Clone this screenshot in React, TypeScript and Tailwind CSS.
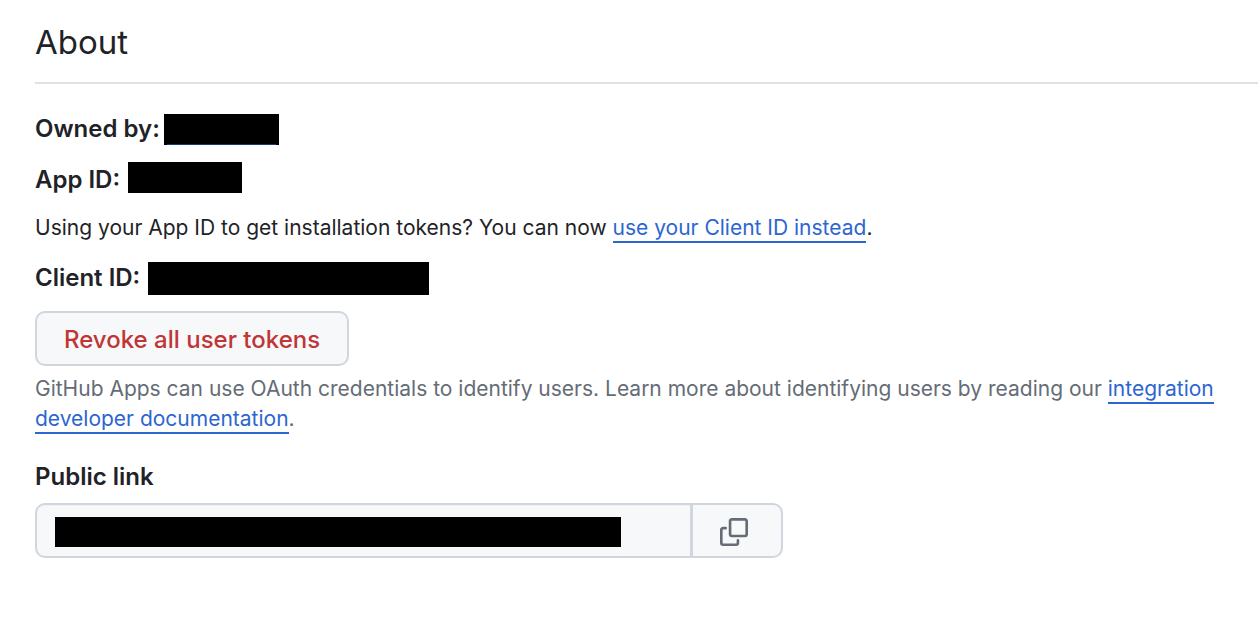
const linkClass = "border-b-2 border-[#2c66d0] pb-px text-[#2c66d0]";

function Redacted({ className }: { className: string }) {
  return <span aria-hidden="true" className={`block bg-black ${className}`} />;
}

function CopyIcon() {
  return (
    <svg aria-hidden="true" viewBox="0 0 16 16" className="size-7 fill-current">
      <path d="M0 6.75C0 5.784.784 5 1.75 5h1.5a.75.75 0 0 1 0 1.5h-1.5a.25.25 0 0 0-.25.25v7.5c0 .138.112.25.25.25h7.5a.25.25 0 0 0 .25-.25v-1.5a.75.75 0 0 1 1.5 0v1.5A1.75 1.75 0 0 1 9.25 16h-7.5A1.75 1.75 0 0 1 0 14.25Z" />
      <path d="M5 1.75C5 .784 5.784 0 6.75 0h7.5C15.216 0 16 .784 16 1.75v7.5A1.75 1.75 0 0 1 14.25 11h-7.5A1.75 1.75 0 0 1 5 9.25Zm1.75-.25a.25.25 0 0 0-.25.25v7.5c0 .138.112.25.25.25h7.5a.25.25 0 0 0 .25-.25v-7.5a.25.25 0 0 0-.25-.25Z" />
    </svg>
  );
}

export default function App() {
  return (
    <main className="bg-white pl-[35px] font-['Inter',sans-serif] text-[#1f2328]">
      <h2 className="border-b-2 border-[#dfe3e8] pt-5 pb-[18px] text-[33px] leading-[44px]">About</h2>

      <div className="flex items-start gap-1 pt-[30px]">
        <strong className="text-2xl leading-[30px] font-semibold">Owned by:</strong>
        <a href="#owner" aria-label="Owner" className="flex h-[31px] w-[115px] items-end bg-black px-[3px]">
          <span className="h-px w-full bg-[#173a7c]" />
        </a>
      </div>
      <div className="flex items-start gap-2 pt-[17px]">
        <strong className="text-2xl leading-9 font-semibold">App ID:</strong>
        <Redacted className="h-[31px] w-[114px]" />
      </div>
      <p className="pt-[15px] text-[21px] leading-[30px]">
        Using your App ID to get installation tokens? You can now{" "}
        <a href="#client-id" className={linkClass}>use your Client ID instead</a>.
      </p>
      <div id="client-id" className="flex items-start gap-2 pt-[19px]">
        <strong className="text-2xl leading-8 font-semibold">Client ID:</strong>
        <Redacted className="h-[33px] w-[281px]" />
      </div>
      <button
        type="button"
        className="mt-4 block h-[55px] rounded-[10px] border-2 border-[#d1d6de] bg-[#f6f8fa] px-[27px] pt-0.5 text-2xl font-medium text-[#c03535]"
      >
        Revoke all user tokens
      </button>
      <p className="pt-2 pr-10 text-[21px] leading-[30px] text-[#656c76]">
        GitHub Apps can use OAuth credentials to identify users. Learn more about identifying users by reading our{" "}
        <a href="#docs" className={linkClass}>integration developer documentation</a>.
      </p>
      <label htmlFor="public-link" className="block pt-[25px] text-2xl leading-9 font-semibold">Public link</label>
      <div className="mt-2 flex h-[55px] w-full max-w-[748px] rounded-[10px] border-2 border-[#d1d6de] bg-[#f6f8fa]">
        <div className="grid min-w-0 flex-1 items-center">
          <input id="public-link" readOnly className="col-start-1 row-start-1 h-full w-full rounded-l-lg bg-transparent px-4 shadow-[inset_0_1px_0_#eceff3]" />
          <Redacted className="col-start-1 row-start-1 mt-0.5 ml-[18px] h-[30px] w-[566px]" />
        </div>
        <button type="button" aria-label="Copy public link" className="grid w-[91px] place-items-center border-l-3 border-[#d1d6de] pt-0.5 pr-1.5 text-[#656c76]">
          <CopyIcon />
        </button>
      </div>
    </main>
  );
}
